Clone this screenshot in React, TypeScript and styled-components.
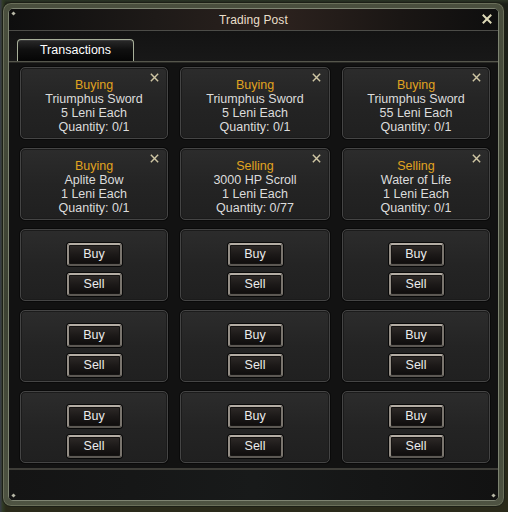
import React from "react";
import styled, { createGlobalStyle } from "styled-components";

const Global = createGlobalStyle`
  html, body { margin: 0; padding: 0; }
  body { font-family: "Liberation Sans", Arial, sans-serif; background: #1a1c14; }
`;

const Scene = styled.div`
  width: 508px;
  height: 512px;
  box-sizing: border-box;
  padding: 2px 0 0 2px;
  background:
    linear-gradient(90deg, #3a3d4a 0px, #2f3a22 3px, rgba(0,0,0,0) 6px),
    linear-gradient(180deg, #2c3526 0px, #1b1f18 4px, #2a2a1a 100%),
    linear-gradient(90deg, #3a4a2a, #2a2a20 50%, #5a4a2a);
  overflow: hidden;
`;

const Window = styled.div`
  width: 503px;
  height: 505px;
  box-sizing: border-box;
  border: 1px solid #1c1f16;
  border-radius: 9px;
  padding: 5px;
  background: linear-gradient(180deg, #4a4f3e, #3c4132 60%, #4e5342);
  box-shadow: inset 0 0 0 1px #6a6f5a;
  display: flex;
`;

const Inner = styled.div`
  flex: 1;
  border: 1px solid #7e8472;
  border-radius: 5px;
  background: #121212;
  display: flex;
  flex-direction: column;
  overflow: hidden;
  position: relative;
`;

const TitleBar = styled.div`
  height: 21px;
  flex: none;
  display: flex;
  align-items: center;
  justify-content: center;
  position: relative;
  background: linear-gradient(90deg, #0e0e0e 0%, #1e1a18 30%, #2c221e 55%, #1a1614 80%, #0e0e0e 100%);
  border-bottom: 1px solid #4c4c48;
  color: #eadfcb;
  font-size: 12px;
  letter-spacing: 0.1px;
`;

const CornerMark = styled.span<{ $pos: "tl" | "bl" | "br" }>`
  position: absolute;
  width: 3px;
  height: 3px;
  background: #b9b9a8;
  transform: rotate(45deg);
  ${(p) => (p.$pos === "tl" ? "left: 3px; top: 3px;" : "")}
  ${(p) => (p.$pos === "bl" ? "left: 3px; bottom: 3px;" : "")}
  ${(p) => (p.$pos === "br" ? "right: 3px; bottom: 3px;" : "")}
`;

const CloseIcon = styled.svg<{ $size: number }>`
  position: absolute;
  width: ${(p) => p.$size}px;
  height: ${(p) => p.$size}px;
`;

const MainClose = styled(CloseIcon)`
  right: 6px;
  top: 5px;
`;

const CardClose = styled(CloseIcon)`
  right: 8px;
  top: 5px;
`;

const TabRow = styled.div`
  height: 31px;
  flex: none;
  box-sizing: border-box;
  padding: 9px 0 0 8px;
  display: flex;
  align-items: flex-end;
  background: linear-gradient(180deg, #131313, #181818);
  border-bottom: 1px solid #55564c;
  box-shadow: 0 1px 0 #2a2a26;
`;

const Tab = styled.div`
  width: 117px;
  height: 22px;
  box-sizing: border-box;
  border: 1px solid #a8b09a;
  border-bottom: none;
  border-radius: 4px 4px 0 0;
  background: linear-gradient(180deg, #2a2a2a 0%, #101010 45%, #050505 100%);
  box-shadow: inset 0 1px 0 #3a3a3a;
  color: #ffffff;
  font-size: 12.5px;
  display: flex;
  align-items: center;
  justify-content: center;
  padding-bottom: 1px;
`;

const Grid = styled.div`
  display: grid;
  grid-template-columns: 148px 150px 148px;
  grid-auto-rows: 72px;
  column-gap: 12px;
  row-gap: 9px;
  padding: 5px 0 0 11px;
  flex: none;
`;

const Card = styled.div`
  position: relative;
  box-sizing: border-box;
  border: 1px solid #454545;
  border-radius: 5px;
  background: linear-gradient(180deg, #2c2c2c 0%, #242424 50%, #202020 100%);
  box-shadow: inset 0 0 0 1px #1b1b1b, 0 0 0 1px #0a0a0a;
  display: flex;
  flex-direction: column;
  align-items: center;
`;

const InfoCard = styled(Card)`
  padding-top: 10px;
`;

const ActionCard = styled(Card)`
  padding-top: 13px;
  gap: 7px;
`;

const Line = styled.div<{ $accent?: boolean }>`
  font-size: 12.5px;
  line-height: 14px;
  color: ${(p) => (p.$accent ? "#e0a420" : "#dcdcdc")};
  white-space: nowrap;
`;

const Button = styled.button`
  width: 55px;
  height: 23px;
  box-sizing: border-box;
  margin: 0;
  padding: 0 0 1px;
  border: 2px solid;
  border-color: #b4ada4 #7a756e #5c5853 #948e86;
  border-radius: 3px;
  background: linear-gradient(180deg, #2e2a28 0%, #1c1918 50%, #0e0c0c 100%);
  box-shadow: 0 0 0 1px #080808, inset 0 0 0 1px #151312;
  color: #ececec;
  font-family: "Liberation Sans", Arial, sans-serif;
  font-size: 12.5px;
  cursor: pointer;
`;

const Footer = styled.div`
  margin-top: 5px;
  flex: 1;
  border-top: 2px solid #3e3d38;
  background: linear-gradient(90deg, #141414, #181a1a 50%, #121212);
`;

const XGlyph = ({ size, color, width, Comp }: { size: number; color: string; width: number; Comp: typeof MainClose }) => (
  <Comp $size={size} viewBox="0 0 10 10">
    <path d="M1.5 1.5 L8.5 8.5 M8.5 1.5 L1.5 8.5" stroke={color} strokeWidth={width} strokeLinecap="square" fill="none" />
  </Comp>
);

type Tx = { kind: "Buying" | "Selling"; item: string; price: string; qty: string };

const txs: Tx[] = [
  { kind: "Buying", item: "Triumphus Sword", price: "5 Leni Each", qty: "Quantity: 0/1" },
  { kind: "Buying", item: "Triumphus Sword", price: "5 Leni Each", qty: "Quantity: 0/1" },
  { kind: "Buying", item: "Triumphus Sword", price: "55 Leni Each", qty: "Quantity: 0/1" },
  { kind: "Buying", item: "Aplite Bow", price: "1 Leni Each", qty: "Quantity: 0/1" },
  { kind: "Selling", item: "3000 HP Scroll", price: "1 Leni Each", qty: "Quantity: 0/77" },
  { kind: "Selling", item: "Water of Life", price: "1 Leni Each", qty: "Quantity: 0/1" },
];

export default function App() {
  return (
    <Scene>
      <Global />
      <Window>
        <Inner>
          <TitleBar>
            <CornerMark $pos="tl" />
            Trading Post
            <XGlyph size={10} width={2} color="#dedab8" Comp={MainClose} />
          </TitleBar>
          <TabRow>
            <Tab>Transactions</Tab>
          </TabRow>
          <Grid>
            {txs.map((t, i) => (
              <InfoCard key={i}>
                <XGlyph size={9} width={1.6} color="#cfc6a4" Comp={CardClose} />
                <Line $accent>{t.kind}</Line>
                <Line>{t.item}</Line>
                <Line>{t.price}</Line>
                <Line>{t.qty}</Line>
              </InfoCard>
            ))}
            {Array.from({ length: 9 }).map((_, i) => (
              <ActionCard key={`a${i}`}>
                <Button>Buy</Button>
                <Button>Sell</Button>
              </ActionCard>
            ))}
          </Grid>
          <Footer />
          <CornerMark $pos="bl" />
          <CornerMark $pos="br" />
        </Inner>
      </Window>
    </Scene>
  );
}
